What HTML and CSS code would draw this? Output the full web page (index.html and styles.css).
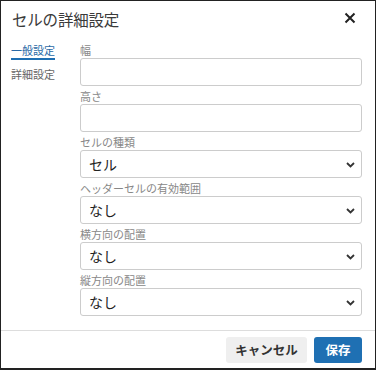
FILE: index.html
```html
<!DOCTYPE html>
<html lang="ja">
<head>
<meta charset="utf-8">
<link rel="stylesheet" href="styles.css">
</head>
<body>
<div class="dialog">
  <div class="header">
    <div class="title">セルの詳細設定</div>
    <svg class="close" width="12" height="12" viewBox="0 0 12 12"><path d="M1.5 1.5 L10.5 10.5 M10.5 1.5 L1.5 10.5" stroke="#222" stroke-width="2" stroke-linecap="butt"/></svg>
  </div>
  <div class="body">
    <div class="nav">
      <div class="nav-item active">一般設定</div>
      <div class="nav-item">詳細設定</div>
    </div>
    <div class="form">
      <div class="field">
        <div class="label">幅</div>
        <div class="input"></div>
      </div>
      <div class="field">
        <div class="label">高さ</div>
        <div class="input"></div>
      </div>
      <div class="field">
        <div class="label">セルの種類</div>
        <div class="input select"><span>セル</span><svg class="chev" width="9" height="6" viewBox="0 0 9 6"><path d="M1 1 L4.5 4.5 L8 1" fill="none" stroke="#333" stroke-width="1.8"/></svg></div>
      </div>
      <div class="field">
        <div class="label">ヘッダーセルの有効範囲</div>
        <div class="input select"><span>なし</span><svg class="chev" width="9" height="6" viewBox="0 0 9 6"><path d="M1 1 L4.5 4.5 L8 1" fill="none" stroke="#333" stroke-width="1.8"/></svg></div>
      </div>
      <div class="field">
        <div class="label">横方向の配置</div>
        <div class="input select"><span>なし</span><svg class="chev" width="9" height="6" viewBox="0 0 9 6"><path d="M1 1 L4.5 4.5 L8 1" fill="none" stroke="#333" stroke-width="1.8"/></svg></div>
      </div>
      <div class="field">
        <div class="label">縦方向の配置</div>
        <div class="input select"><span>なし</span><svg class="chev" width="9" height="6" viewBox="0 0 9 6"><path d="M1 1 L4.5 4.5 L8 1" fill="none" stroke="#333" stroke-width="1.8"/></svg></div>
      </div>
    </div>
  </div>
  <div class="footer">
    <div class="btn cancel">キャンセル</div>
    <div class="btn save">保存</div>
  </div>
</div>
</body>
</html>
```
FILE: styles.css
```css
* { box-sizing: border-box; }
html, body { margin: 0; padding: 0; background: #fff; }
body {
  font-family: "Noto Sans CJK JP", "Noto Sans", sans-serif;
  color: #333;
}
.dialog {
  width: 376px;
  height: 370px;
  border: 1px solid #222;
  border-bottom-width: 2px;
  display: flex;
  flex-direction: column;
}
.header {
  height: 36px;
  display: flex;
  align-items: center;
  justify-content: space-between;
  padding: 0 19px 0 11px;
}
.title {
  font-size: 15.5px;
  line-height: 36px;
  color: #3a3a3a;
  letter-spacing: -0.2px;
}
.close { margin-top: -2px; }
.body {
  display: flex;
  padding: 5px 13px 0 10px;
  height: 294px;
  border-bottom: 1px solid #ddd;
}
.nav {
  width: 69px;
  flex: none;
  display: flex;
  flex-direction: column;
  align-items: flex-start;
}
.nav-item {
  font-size: 11px;
  line-height: 16px;
  color: #666;
  margin-bottom: 6px;
}
.nav-item.active {
  color: #2b6aa6;
  border-bottom: 2px solid #1f6fb2;
}
.form {
  flex: 1;
  display: flex;
  flex-direction: column;
  gap: 2px;
}
.label {
  font-size: 11px;
  line-height: 16px;
  color: #888;
}
.input {
  height: 28px;
  border: 1px solid #ccc;
  border-radius: 3px;
  background: #fff;
}
.select {
  display: flex;
  align-items: center;
  justify-content: space-between;
  padding: 0 6px 0 8px;
  font-size: 14px;
  color: #222;
}
.chev { margin-top: 1px; }
.footer {
  flex: 1;
  display: flex;
  justify-content: flex-end;
  align-items: flex-start;
  gap: 7px;
  padding: 6px 13px 0 0;
}
.btn {
  height: 26px;
  line-height: 26px;
  border-radius: 3px;
  font-size: 12.5px;
  font-weight: bold;
  text-align: center;
}
.cancel {
  width: 81px;
  background: #efefef;
  color: #333;
}
.save {
  width: 48px;
  background: #1f70b3;
  color: #fff;
}
```
